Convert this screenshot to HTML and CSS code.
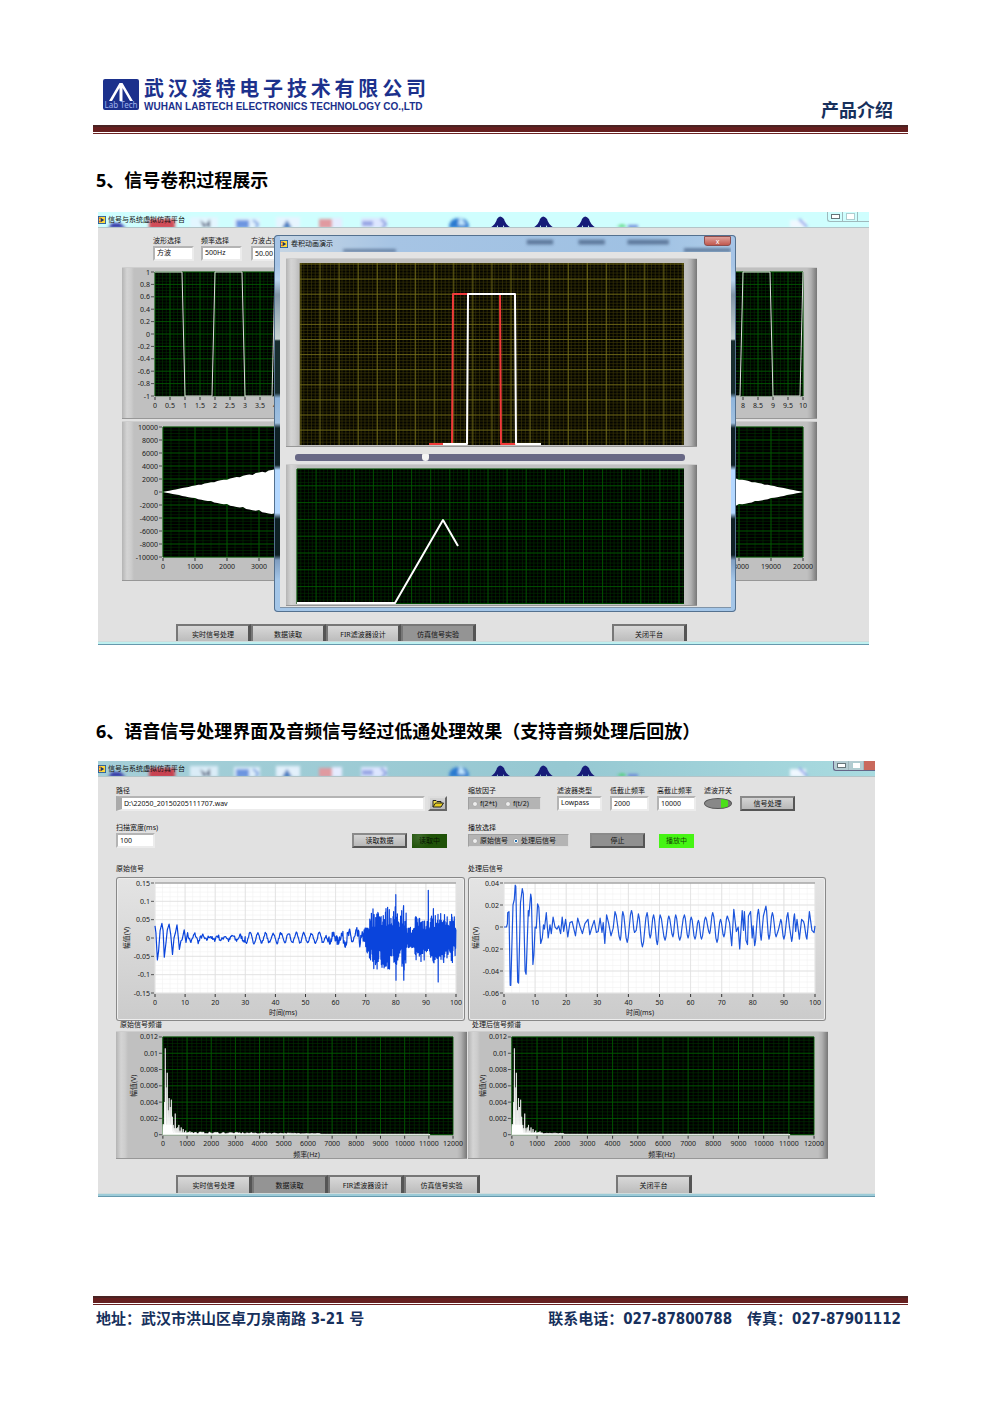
FILE: index.html
```html
<!DOCTYPE html>
<html lang="zh-CN">
<head>
<meta charset="utf-8">
<meta name="viewport" content="width=device-width, initial-scale=1">
<title>产品介绍</title>
<link rel="stylesheet" href="styles.css">
</head>
<body>
<svg class="defs" aria-hidden="true">
  <defs>
    <filter id="soft" x="-5%" y="-50%" width="110%" height="200%"><feGaussianBlur stdDeviation="1.6"/></filter>
    <filter id="softer" x="-5%" y="-50%" width="110%" height="200%"><feGaussianBlur stdDeviation=".7"/></filter>
    <symbol id="desk" viewBox="0 0 771 16">
      <g filter="url(#soft)">
        <path d="M10 16l4-5h8l6 5z" fill="#3538a8"/>
        <rect x="51" y="7" width="26" height="10" fill="#d2202e" opacity=".8"/>
        <rect x="92" y="5" width="28" height="11" fill="#e8f4ff" opacity=".8"/>
        <path d="M102 8l4 8 6-9v9z" fill="#405070"/>
        <rect x="136" y="6" width="26" height="10" fill="#e4f2ff" opacity=".9"/>
        <rect x="138" y="8" width="13" height="8" fill="#6d95e0"/>
        <path d="M155 8l5 4-2 4" stroke="#6b98dc" stroke-width="2" fill="none"/>
        <rect x="178" y="5" width="24" height="11" fill="#eaf4ff" opacity=".9"/>
        <path d="M184 16l5-8 5 8z" fill="#477bc0"/>
        <rect x="221" y="7" width="13" height="9" fill="#e09aa0"/>
        <rect x="234" y="6" width="10" height="10" fill="#e6ecff"/>
        <rect x="263" y="6" width="26" height="10" fill="#dde6ff"/>
        <rect x="264" y="9" width="11" height="5" fill="#96a4e4"/>
        <path d="M283 7l5 5-4 4" stroke="#7d94dc" stroke-width="2" fill="none"/>
        <path d="M351 16q0-10 10-10t10 10z" fill="#2b7ad0"/>
        <path d="M362 4l6 9h-8z" fill="#c5eaff"/>
      </g>
      <g filter="url(#softer)" fill="#171a78">
        <path d="M392 16q6-4 7-9 3-5 7 0 1 5 7 9h-6l-2-3v3h-5v-3l-2 3z"/>
        <path d="M435 16q6-4 7-9 3-5 7 0 1 5 7 9h-6l-2-3v3h-5v-3l-2 3z"/>
        <path d="M477 16q6-4 7-9 3-5 7 0 1 5 7 9h-6l-2-3v3h-5v-3l-2 3z"/>
      </g>
      <g filter="url(#soft)">
        <path d="M519 15q5-5 10 0z" fill="#3bd060"/>
        <rect x="530" y="13" width="10" height="3" fill="#6a86d8"/>
        <rect x="692" y="8" width="16" height="8" fill="#f0f8ff"/>
        <path d="M701 7l8 8" stroke="#7e96e8" stroke-width="2"/>
      </g>
    </symbol>
    <symbol id="vi" viewBox="0 0 9 9">
      <rect x=".5" y=".5" width="8" height="8" fill="#ffd83a" stroke="#235ca0"/>
      <path d="M1 2.500h2M1 6h2" stroke="#d33" />
      <path d="M3 2l4 2.500-4 2.500z" fill="#1c3468"/>
    </symbol>
  </defs>
</svg>

<div class="page">
  <header class="masthead">
    <div class="brand">
      <svg class="brand-mark" viewBox="0 0 36 31" role="img" aria-label="Lab Tech">
        <rect width="36" height="31" rx="2" fill="#1c318c"/>
        <path d="M6 22L16.500 4h3L30 22h-3L19.500 9v13h-3V9L9 22z" fill="#fff"/>
        <text x="18" y="29" text-anchor="middle">Lab Tech</text>
      </svg>
      <div class="brand-name">
        <div class="brand-cn">武汉凌特电子技术有限公司</div>
        <div class="brand-en">WUHAN LABTECH ELECTRONICS TECHNOLOGY CO.,LTD</div>
      </div>
    </div>
    <div class="doc-kind">产品介绍</div>
  </header>
  <div class="rule"></div>

  <main>
    <section class="item item-conv">
      <h2>5、信号卷积过程展示</h2>
      <div class="app app-conv">
        <div class="titlebar">
          <svg class="desk" preserveAspectRatio="xMinYMid meet" viewBox="0 0 771 16"><use href="#desk"/></svg>
          <svg class="vi"><use href="#vi"/></svg><span>信号与系统虚拟仿真平台</span>
          <div class="winbtns"><i class="min"></i><i class="max"></i><i class="cls"></i></div>
        </div>
        <div class="panel-area">
          <div class="controls">
            <label class="field">波形选择<select><option>方波</option></select></label>
            <label class="field">频率选择<select><option>500Hz</option></select></label>
            <label class="field duty">方波占空比<input type="text" value="50.00"></label>
          </div>
          <div class="pair">
            <div class="bevel"><svg data-chart="squareLeft"></svg></div>
            <div class="bevel"><svg data-chart="squareRight"></svg></div>
          </div>
          <div class="bevel"><svg data-chart="convResult"></svg></div>
          <nav class="tabs">
            <button type="button">实时信号处理</button><button type="button">数据读取</button><button type="button">FIR滤波器设计</button><button type="button" class="on">仿真信号实验</button><button type="button" class="quit">关闭平台</button>
          </nav>
        </div>
        <div class="taskbar"></div>

        <div class="dialog" role="dialog" aria-label="卷积动画演示">
          <div class="dialog-title">
            <svg class="ghost" viewBox="0 0 450 17" preserveAspectRatio="xMaxYMid meet" aria-hidden="true">
              <g filter="url(#soft)" fill="#40587c" opacity=".7"><rect x="233" y="4" width="28" height="5"/><rect x="288" y="4" width="28" height="5"/><rect x="340" y="4" width="44" height="5"/><rect x="38" y="14" width="56" height="3"/><rect x="400" y="13" width="50" height="4"/></g>
            </svg>
            <svg class="vi"><use href="#vi"/></svg><span>卷积动画演示</span>
            <button type="button" class="dialog-close" aria-label="关闭">x</button>
          </div>
          <div class="dialog-body">
            <div class="bevel"><svg data-chart="slide"></svg></div>
            <input class="seek" type="range" min="0" max="100" value="33" aria-label="进度">
            <div class="bevel"><svg data-chart="conv"></svg></div>
          </div>
        </div>
      </div>
    </section>

    <section class="item item-audio">
      <h2>6、语音信号处理界面及音频信号经过低通处理效果（支持音频处理后回放）</h2>
      <div class="app app-audio">
        <div class="titlebar">
          <svg class="desk" preserveAspectRatio="xMinYMid meet" viewBox="0 0 771 16"><use href="#desk"/></svg>
          <svg class="vi"><use href="#vi"/></svg><span>信号与系统虚拟仿真平台</span>
          <div class="winbtns"><i class="min"></i><i class="max"></i><i class="cls"></i></div>
        </div>
        <div class="panel-area">
          <div class="columns">
            <div class="column">
              <div class="row source">
                <label class="field path">路径<input type="text" value="D:\22050_20150205111707.wav"></label>
                <button type="button" class="btn folder" aria-label="浏览"><svg viewBox="0 0 12 9"><path d="M1 8V1.500h3l1 1h4V4" fill="#f4e04a" stroke="#222"/><path d="M1 8l2.500-4H11.500L9 8z" fill="#e8cf20" stroke="#222"/></svg></button>
              </div>
              <div class="row">
                <label class="field scan">扫描宽度(ms)<input type="text" value="100"></label>
                <button type="button" class="btn read">读取数据</button>
                <span class="led off">读取中</span>
              </div>
            </div>
            <div class="column">
              <div class="row">
                <fieldset class="field scale"><legend>缩放因子</legend><div class="radios"><label><input type="radio" name="scale">f(2*t)</label><label><input type="radio" name="scale">f(t/2)</label></div></fieldset>
                <label class="field kind">滤波器类型<select><option>Lowpass</option></select></label>
                <label class="field">低截止频率<input type="text" value="2000"></label>
                <label class="field">高截止频率<input type="text" value="10000"></label>
                <label class="field switch">滤波开关<input type="checkbox" checked></label>
                <button type="button" class="btn">信号处理</button>
              </div>
              <div class="row">
                <fieldset class="field play"><legend>播放选择</legend><div class="radios"><label><input type="radio" name="play">原始信号</label><label><input type="radio" name="play" checked>处理后信号</label></div></fieldset>
                <button type="button" class="btn stop">停止</button>
                <span class="led lit">播放中</span>
              </div>
            </div>
          </div>
          <div class="columns graphs">
            <figure><figcaption>原始信号</figcaption><div class="soft-panel"><svg data-chart="rawWave"></svg></div></figure>
            <figure><figcaption>处理后信号</figcaption><div class="soft-panel"><svg data-chart="outWave"></svg></div></figure>
            <figure><figcaption class="inset">原始信号频谱</figcaption><div class="bevel"><svg data-chart="rawSpec"></svg></div></figure>
            <figure><figcaption class="inset">处理后信号频谱</figcaption><div class="bevel"><svg data-chart="outSpec"></svg></div></figure>
          </div>
          <nav class="tabs">
            <button type="button">实时信号处理</button><button type="button" class="on">数据读取</button><button type="button">FIR滤波器设计</button><button type="button">仿真信号实验</button><button type="button" class="quit">关闭平台</button>
          </nav>
        </div>
        <div class="taskbar"></div>
      </div>
    </section>
  </main>

  <footer>
    <div class="rule"></div>
    <div class="contact">
      <span>地址：武汉市洪山区卓刀泉南路 3-21 号</span>
      <span class="phones"><span>联系电话：027-87800788</span><span>传真：027-87901112</span></span>
    </div>
  </footer>
</div>
<script src="charts.js"></script>
</body>
</html>
```

FILE: styles.css
```css
* { box-sizing: border-box; }
body { margin: 0; background: #fff; color: #111; font-family: "Noto Sans", "Noto Sans CJK SC", sans-serif; }
.defs { position: absolute; width: 0; height: 0; }
.page { padding: 78px 92px 84px 93px; }
button, input, select { font: inherit; color: inherit; margin: 0; }
h2, figure, fieldset, legend { margin: 0; padding: 0; border: 0; }

/* header */
.masthead { display: flex; justify-content: space-between; padding: 0 15px 0 10px; height: 47px; }
.brand { display: flex; gap: 5px; align-items: flex-start; }
.brand-mark { width: 36px; height: 31px; margin-top: 1px; }
.brand-name { width: 282px; color: #1c318c; }
.brand-cn { font: 700 20px/20px "Noto Sans CJK SC", sans-serif; text-align-last: justify; white-space: nowrap; }
.brand-en { padding-top: 3px; font: bold 10px/12px "Liberation Sans", sans-serif; white-space: nowrap; }
.doc-kind { align-self: flex-end; font: bold 18px/32px "Noto Sans CJK SC", sans-serif; color: #17305c; }
.rule { height: 9px; border-top: 2px solid #4a2222; border-bottom: 1px solid #6b2222; background: linear-gradient(#661f1f 5px, #fff 5px); }

h2 { padding-left: 3px; font: bold 18px/28px "Noto Sans", "Noto Sans CJK SC", sans-serif; color: #000; }
.item-conv { padding-top: 32px; }
.item-audio { padding-top: 72px; }

/* program windows */
.app { position: relative; margin: 18px 39px 0 5px; font-size: 7px; line-height: 10px; background: #e1e1e1; }
.app-audio { margin: 16px 33px 0 5px; }
.titlebar { position: relative; display: flex; align-items: center; height: 16px; gap: 2px; background: #cffefe; border-bottom: 1px solid #b4c4c8; overflow: hidden; }
.app-audio .titlebar { background: linear-gradient(90deg, #a5cfd8, #96c8d2 60%, #a9dbe0); }
.titlebar span { position: relative; }
.desk { position: absolute; inset: 0; width: 100%; height: 16px; }
.vi { position: relative; width: 8px; height: 8px; }
.winbtns { position: relative; display: flex; align-self: flex-start; margin-left: auto; height: 10px; border: 1px solid #9fb9bc; border-width: 0 0 1px 1px; border-radius: 0 0 0 3px; }
.winbtns i { width: 15px; border-right: 1px solid #9fb9bc; display: grid; place-items: center; }
.winbtns .cls { width: 11px; border: 0; }
.winbtns i::before { content: ""; width: 7px; height: 3px; border: 1px solid #66757a; background: #fff; }
.winbtns .max::before { height: 5px; border-color: #aecdd0; }
.winbtns .cls::before { display: none; }
.app-audio .winbtns { background: #b4ccd2; border-color: #668; }
.app-audio .winbtns .cls { background: #c9695c; }
.taskbar { height: 4px; background: #bff0f0; border-top: 1px solid #d0dcdc; border-bottom: 1px solid #6699ad; }
.app-audio .taskbar { background: #9ccbd8; }

.field { display: flex; flex-direction: column; width: 41px; white-space: nowrap; }
.field > input[type=text], .field > select { width: 100%; height: 15px; padding: 0 2px 1px; border: 2px solid; border-color: #b4b4b4 #ececec #ececec #b4b4b4; border-radius: 0; background: #fff; appearance: none; line-height: 10px; outline: 0; }
legend { height: 10px; }

.bevel { background: linear-gradient(90deg, #b4b4b4, #d4d4d4 5px, #cdcdcd 9px, #c0c0c0 12px, #c0c0c0 calc(100% - 10px), #b0b0b0 calc(100% - 6px), #777); border: solid; border-width: 1px 0; border-color: #cecece transparent #979797; }
.bevel svg, .soft-panel svg { display: block; width: 100%; height: auto; margin: -1px 0; }
.soft-panel { margin-right: 3px; border-radius: 3px; background: linear-gradient(#e4e4e4, #cbcbcb); box-shadow: inset 0 0 0 1px #888, inset 0 0 0 2px #eee; }
.soft-panel svg { margin: 0; }
svg text { fill: #1a1a1a; font-size: 7px; }
.brand-mark text { fill: #9fb2ec; font: 8px "Noto Sans", sans-serif; }

.tabs { display: flex; }
.tabs button { width: 75px; height: 18px; padding: 2px 0 0; border: 1px solid; border-width: 2px 3px 0 2px; border-color: #777 #555 #777 #777; background: linear-gradient(#d8d8d8, #bcbcbc); line-height: 10px; }
.tabs .on { background: #949494; }
.tabs .quit { margin-left: 136px; }

/* convolution window */
.app-conv .panel-area { padding: 8px 52px 0 24px; }
.controls { display: flex; gap: 7px; padding-left: 31px; height: 31px; }
.controls .duty { margin-left: 2px; }
.pair { display: grid; grid-template-columns: 1fr 1fr; gap: 1px; margin-bottom: 2px; }
.app-conv .tabs { padding: 43px 0 0 54px; }
.app-conv .tabs button { height: 17px; }

.dialog { position: absolute; top: 23px; left: 176px; right: 133px; padding: 0 5px 4px 6px; border-radius: 4px; box-shadow: inset 0 0 0 1px #54718f; background: linear-gradient(#a6c4e6 30px, #b9d4ee 45px, #8095a6 60px, #c8d4d4 104px, #182d2f 106px, #182d2f 158px, #8fb5dc 163px, #a0c0e0 188px, #0e2024 193px, #0e2024 230px, #b4d8ff 235px, #b4d8ff 278px, #0e2024 284px, #0e2024 320px, #7f9dc0 325px, #a4c6e8 345px); }
.dialog-title { position: relative; display: flex; align-items: center; gap: 3px; height: 16px; margin-top: 1px; background: linear-gradient(90deg, #c5d5e4, #a6c4e4 25%, #9fc1e3 80%, #adcbe8); }
.dialog-title span { position: relative; }
.ghost { position: absolute; inset: 0; width: 100%; height: 16px; }
.dialog-close { position: relative; align-self: flex-start; margin-left: auto; width: 27px; height: 10px; padding: 0; border: 1px solid #8d4e4e; border-radius: 0 0 3px 3px; background: linear-gradient(#dfa29c, #c1584e); color: #fff; line-height: 7px; }
.dialog-body { padding: 6px 34px 1px 6px; background: #e3e3e3; border: 1px solid #8094a8; border-width: 0 0 1px; }
.seek { display: block; appearance: none; width: 391px; max-width: 95%; height: 7px; margin: 7px 0 3px 9px; border-radius: 3px; background: #686885; }
.seek::-webkit-slider-thumb { appearance: none; width: 7px; height: 7px; border-radius: 1px 1px 4px 4px; background: #f4f4f4; }

/* audio window */
.app-audio .panel-area { padding: 9px 46px 0 18px; }
.columns { display: grid; grid-template-columns: 352fr 361fr; }
.column { display: flex; flex-direction: column; gap: 12px; }
.column:first-child { padding-right: 21px; }
.row { display: flex; align-items: flex-end; gap: 8px; height: 25px; }
.row .field { width: 39px; }
.row .field.path { flex: 1; }
.row .path input { border-left: 6px solid #aaa; }
.row.source { gap: 3px; }
.row .scale { width: 73px; margin-right: 8px; }
.row .kind { width: 45px; }
.row .play { width: 101px; margin-right: 13px; }
.row .switch { width: 28px; }
.switch input { appearance: none; width: 28px; height: 11px; margin: 2px 0; border: 1px solid #555; border-radius: 50%; background: linear-gradient(90deg, #888 60%, #4be01a 60%, #4be01a 88%, #777 88%); }
.radios { display: flex; align-items: center; gap: 5px; height: 13px; margin: 1px 0; padding: 0 4px 0 3px; background: #b4b4b4; border: 1px solid; border-color: #a0a0a0 #ddd #ddd #a0a0a0; }
.scale .radios { gap: 8px; }
.radios label { display: flex; align-items: center; gap: 2px; }
.radios input { appearance: none; width: 6px; height: 6px; border: 1px solid #aaa; border-radius: 50%; background: #eee; }
.radios input:checked { background: radial-gradient(#1f6fb0 45%, #fff 55%); }
.btn { width: 55px; height: 15px; padding: 0; border: 2px solid; border-color: #8a8a8a #555 #555 #8a8a8a; background: linear-gradient(#d4d4d4, #b8b8b8); line-height: 10px; }
.folder { width: 19px; border-color: #ddd #666 #666 #ddd; display: grid; place-items: center; }
.folder svg { width: 12px; height: 9px; }
.read { margin-left: auto; }
.source + .row { gap: 5px; }
.stop { background: #909090; margin-right: 6px; }
.led { width: 35px; height: 14px; text-align: center; line-height: 14px; }
.led.off { background: radial-gradient(circle at 20% 20%, #3f6b2c, #1f5208 40%); color: #051500; }
.led.lit { background: #45f513; color: #134a05; }
.graphs { padding-top: 16px; }
.graphs .bevel { margin-right: 1px; }
figcaption { height: 13px; }
figcaption.inset { height: 10px; padding-left: 4px; line-height: 8px; }
.app-audio .tabs { padding: 16px 0 0 60px; }
.app-audio .tabs button { width: 76px; }

/* footer */
footer { padding-top: 99px; }
.contact { display: flex; justify-content: space-between; padding: 2px 7px 0 3px; font: bold 15px/24px "DejaVu Sans Condensed", "Noto Sans CJK SC", sans-serif; color: #17305c; white-space: nowrap; }
.phones { display: flex; gap: 15px; }
```

FILE: charts.js
```js
// Draws every graph of the two program windows into its <svg data-chart>.
const NS = 'http://www.w3.org/2000/svg';
const range = (a, b, step) => {
  const out = [];
  for (let i = 0; a + i * step <= b + step / 1e3; i++) out.push(+(a + i * step).toFixed(4));
  return out;
};
let seed = 7;
const rnd = () => ((seed = (seed * 16807) % 2147483647) / 2147483647);

function add(svg, name, attrs, text) {
  const el = document.createElementNS(NS, name);
  for (const k in attrs) el.setAttribute(k, attrs[k]);
  if (text !== undefined) el.textContent = text;
  svg.appendChild(el);
  return el;
}

function lines(c, dx, dy, ox = 0, oy = 0) {
  const [x0, y0, x1, y1] = c.plot;
  let d = '';
  for (let x = x0 + ox; x <= x1; x += dx) d += `M${x.toFixed(2)} ${y0}V${y1}`;
  for (let y = y0 + oy; y <= y1; y += dy) d += `M${x0} ${y.toFixed(2)}H${x1}`;
  return d;
}

function draw(svg, c) {
  svg.setAttribute('viewBox', `0 0 ${c.size[0]} ${c.size[1]}`);
  const [x0, y0, x1, y1] = c.plot;
  const theme = {
    green: ['#000', '#003200', '#005c00'],
    yellow: ['#050500', '#3f3b08', '#76701a'],
    white: ['#fff', '#f1f1f1', '#dedede'],
  }[c.theme];
  add(svg, 'rect', { x: x0, y: y0, width: x1 - x0, height: y1 - y0, fill: theme[0] });
  add(svg, 'path', { d: lines(c, c.major[0] / c.minor, c.major[1] / c.minor, 0, (c.oy || 0) % (c.major[1] / c.minor)), stroke: theme[1], 'stroke-width': .6 });
  add(svg, 'path', { d: lines(c, c.major[0], c.major[1], c.ox, c.oy), stroke: theme[2], 'stroke-width': .8 });
  if (c.theme === 'white') add(svg, 'path', { d: `M${x0} ${y0}H${x1}`, stroke: '#888' });

  const X = v => x0 + (v - c.x[0]) / (c.x[1] - c.x[0]) * (x1 - x0);
  const Y = v => y1 - (v - c.y[0]) / (c.y[1] - c.y[0]) * (y1 - y0);
  (c.xt || []).forEach(v => {
    add(svg, 'path', { d: `M${X(v)} ${y1 + 1}v3`, stroke: '#333' });
    add(svg, 'text', { x: X(v), y: y1 + 11.5, 'text-anchor': 'middle' }, v);
  });
  (c.yt || []).forEach(v => {
    add(svg, 'path', { d: `M${x0 - 4} ${Y(v)}h3`, stroke: '#333', 'stroke-width': .8 });
    add(svg, 'text', { x: x0 - 5, y: Y(v) + 2.5, 'text-anchor': 'end' }, v);
  });
  if (c.xn) add(svg, 'text', { x: c.xnx, y: y1 + 22, 'text-anchor': 'middle' }, c.xn);
  if (c.yn) add(svg, 'text', { transform: `translate(${c.ynx} ${(y0 + y1) / 2}) rotate(-90)`, 'text-anchor': 'middle' }, c.yn);

  c.series.forEach(s => {
    const pts = s.pts.map(p => `${X(p[0]).toFixed(1)},${Y(p[1]).toFixed(1)}`).join(' ');
    add(svg, s.fill ? 'polygon' : 'polyline', { points: pts, fill: s.fill || 'none', stroke: s.color || 'none', 'stroke-width': s.w || 1, 'stroke-linejoin': 'round' });
  });
}

function square() {
  const p = [];
  for (let k = 0; k < 10; k += 2) p.push([k, 1], [k + .9, 1], [k + 1, -1], [k + 1.9, -1]);
  p.push([10, 1]);
  return p;
}
function diamond() {
  const top = [], bottom = [];
  for (let x = 0; x <= 20000; x += 100) {
    const a = Math.min(x, 20000 - x);
    top.push([x, a * (x % 400 ? 1 : .94)]);
    bottom.unshift([x, -a * (x % 500 ? 1 : .93)]);
  }
  return top.concat(bottom);
}
function rawWave() {
  const p = [[0, .033], [.3, .015], [.8, -.06], [1.2, -.035], [1.7, .02], [2.3, .04], [2.7, .02], [3.1, -.052], [3.7, -.01], [4.1, .022], [4.7, .038], [5.2, .01], [5.8, -.045], [6.3, 0], [6.8, .015], [7.3, .036], [7.7, .005], [8.1, -.031], [8.6, -.008], [9, -.005], [9.7, .022], [10.3, -.012]];
  for (let x = 10.6; x < 30; x += .22) p.push([x, .006 * Math.sin(x * 2.5) * (x < 15 ? 1.7 : 1) + (rnd() - .5) * .013]);
  for (let x = 30; x < 57; x += .22) p.push([x, .013 * Math.sin((x - 33.5) * 2.46) + (rnd() - .5) * .007]);
  for (let x = 57; x < 70; x += .16) p.push([x, .009 * Math.sin(x * 2.46) + (rnd() - .5) * .02 * (1 + (x - 57) / 10)]);
  let sign = 1;
  for (let x = 70; x <= 100; x += .09) {
    const env = x < 72 ? .035 + (x - 70) * .02 : x < 83.5 ? .088 : x < 86 ? .03 : .068;
    sign = -sign;
    p.push([x, sign * env * (.3 + .7 * Math.pow(rnd(), 1.4))]);
  }
  [[80, .118], [80.05, -.115], [82.6, .088], [82.65, -.115], [90.8, .13], [92.5, .08], [94.1, -.12]].forEach(q => p.push(q));
  return p.sort((a, b) => a[0] - b[0]);
}
function outWave() {
  const p = [[0, 0], [.8, 0], [1.1, .003], [1.2, .013], [1.6, .014], [2, -.053], [2.2, -.053], [2.9, .02], [3.3, .025], [3.6, .038], [3.8, .037], [4.4, -.05], [4.7, -.051], [5.3, .022], [5.9, .035], [6.2, .03], [6.8, -.04], [7.1, -.043], [7.8, .015], [8, .01], [8.6, .03], [8.8, .026], [9.3, -.034], [9.6, -.025], [10, 0], [10.4, -.001], [10.8, .021], [11.2, .018], [11.8, -.015], [12.3, -.01], [12.7, .002], [13, -.002], [13.6, .013], [14.2, -.01], [14.8, .002], [15.2, -.006], [15.8, .009], [16.4, 0], [17, -.002], [17.6, .001], [18.2, -.006], [18.7, .009], [19.2, -.004], [19.8, .007], [20.5, -.009], [21.2, .004], [21.9, .005], [23, -.008], [23.7, .008], [24.5, 0], [25.2, -.006], [26, .003], [27, .007], [27.6, -.007], [28.3, 0], [29, .006], [29.7, -.005], [30.3, -.004], [30.9, .008], [31.5, -.005], [31.9, .004], [32.4, -.015], [33, .011], [33.6, .004], [34.4, -.008], [35.1, -.001]];
  [[35.7, .014], [37.4, -.012], [38.2, .014], [39.6, -.014], [41, .015], [42, -.005], [42.5, -.003], [43.2, .012], [44.5, -.018], [46, .013], [47, -.01], [48.1, .011], [49.3, -.016], [50.2, .011], [51.8, -.012], [53, .01], [54.3, -.009], [55.2, .011], [56.5, -.012], [58, .011], [59.2, -.01], [60.2, .009], [61.4, -.011], [62.5, .006], [63.5, -.011], [64.8, .009], [66.1, -.006], [67.1, .013], [68.5, -.014], [69.6, .007], [70.7, -.009], [71.8, .01], [72.5, .004], [73.2, -.017], [73.9, .016], [74.7, -.004], [75.3, 0], [75.8, -.02], [76.6, .015], [77, -.003], [77.3, .014], [77.8, -.012], [78.3, -.016], [78.6, .01], [79.3, .014], [79.8, -.01], [80.1, .001], [80.6, -.017], [81.8, .016], [82.7, -.012], [83.4, .01], [84.2, .019], [85.2, -.011], [86.3, .013], [87.5, -.009], [88.2, -.003], [89, .007], [90, -.011], [91.3, .013], [91.8, 0], [92.5, -.013], [93.4, .012], [93.8, -.004], [94.2, .007], [95, -.011], [95.7, .007], [96.3, .005], [97.4, -.011], [98.2, .014], [99, -.003], [99.7, -.005], [100, .001]].forEach(q => {
    const l = p[p.length - 1];
    if (q[0] - l[0] > .8) {
      const at = t => [l[0] + (q[0] - l[0]) * t, l[1] + (q[1] - l[1]) * (1 - Math.cos(t * Math.PI)) / 2];
      p.push(at(.25), at(.5), at(.75));
    }
    p.push(q);
  });
  return p;
}
function spectrum(tail) {
  const stems = [[30, .001], [70, .004], [100, .0106], [130, .0058], [180, .0076], [220, .003], [260, .0045], [300, .0034], [350, .0043], [390, .0022], [430, .0012], [470, .0008], [510, .0026], [560, .0008], [610, .0009], [660, .0012], [710, .0005], [760, .0009], [840, .0007], [950, .0005], [1120, .0004]];
  const p = [[0, 0], [5, .0011]];
  stems.forEach(s => p.push([s[0] - 14, s[0] < 400 ? .0013 : .0003], s, [s[0] + 14, s[0] < 400 ? .0012 : .0002]));
  for (let x = 1200; x < 11000; x += 60) p.push([x, x < tail ? .0001 + rnd() * .0003 * (1 - x / (tail * 1.2)) : .00006]);
  p.push([11050, 0]);
  return p;
}
const spec = (w, plot, tail, ynx, xnx) => ({
  size: [w, 128], plot, theme: 'green', major: [(plot[2] - plot[0]) / 12, 98 / 6], minor: 5,
  x: [0, 12000], y: [0, .012], xt: range(0, 12000, 1000), yt: range(0, .012, .002),
  xn: '频率(Hz)', xnx, yn: '幅值(V)', ynx,
  series: [{ pts: spectrum(tail), fill: '#fff', color: '#fff', w: .7 }],
});
const sq = () => ({
  size: [347, 152], plot: [33, 5, 333, 129], theme: 'green', major: [15, 12.4], minor: 4,
  x: [0, 10], y: [-1, 1], xt: range(0, 10, .5), yt: range(-1, 1, .2), series: [{ pts: square(), color: '#ddd' }],
});

const charts = {
  squareLeft: sq(),
  squareRight: sq(),
  convResult: {
    size: [695, 160], plot: [41, 6, 681, 136], theme: 'green', major: [32, 13], minor: 4,
    x: [0, 20000], y: [-10000, 10000], xt: range(0, 20000, 1000), yt: range(-10000, 10000, 2000),
    series: [{ pts: diamond(), fill: '#fff' }],
  },
  slide: {
    size: [411, 189], plot: [14, 5, 398, 187], theme: 'yellow', major: [19.1, 15.1], minor: 5, oy: 1, ox: 1,
    x: [0, 384], y: [182, 0],
    series: [
      { pts: [[129, 181], [152, 181], [153, 31], [200, 31], [201, 181], [217, 181]], color: '#f03a3a', w: 2 },
      { pts: [[143, 181], [167, 181], [168, 31], [215, 31], [216, 181], [241, 181]], color: '#fff', w: 2 },
    ],
  },
  conv: {
    size: [411, 142], plot: [11, 5, 398, 140], theme: 'green', major: [19.1, 16.8], minor: 5,
    x: [0, 387], y: [135, 0],
    series: [{ pts: [[0, 134], [98, 134], [146, 51], [161, 77]], color: '#fff', w: 2 }],
  },
  rawWave: {
    size: [349, 144], plot: [39, 6, 340, 116], theme: 'white', major: [30.1, 18.33], minor: 4,
    x: [0, 100], y: [-.15, .15], xt: range(0, 100, 10), yt: range(-.15, .15, .05), xn: '时间(ms)', xnx: 167, yn: '幅值(V)', ynx: 13,
    series: [{ pts: rawWave(), color: '#0a44dc', w: 1.2 }],
  },
  outWave: {
    size: [358, 144], plot: [36, 6, 347, 116], theme: 'white', major: [31.1, 22], minor: 4,
    x: [0, 100], y: [-.06, .04], xt: range(0, 100, 10), yt: range(-.06, .04, .02), xn: '时间(ms)', xnx: 172, yn: '幅值(V)', ynx: 10,
    series: [{ pts: outWave(), color: '#1c55dc', w: 1.2 }],
  },
  rawSpec: spec(352, [47, 6, 338, 104], 6500, 20, 191),
  outSpec: spec(361, [44, 6, 347, 104], 2100, 17, 194),
};
document.querySelectorAll('svg[data-chart]').forEach(s => draw(s, charts[s.dataset.chart]));
```
